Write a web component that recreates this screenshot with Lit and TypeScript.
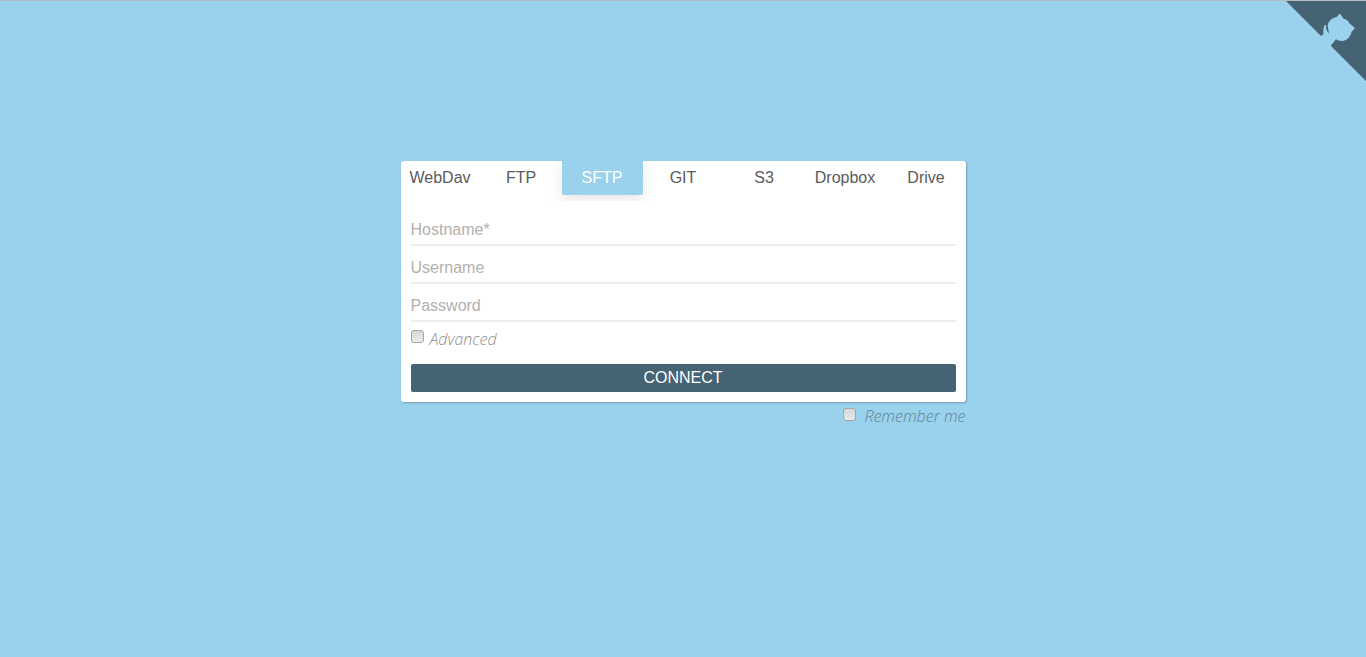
import { LitElement, html, css } from "lit";
import { customElement } from "lit/decorators.js";

const TABS = ["WebDav", "FTP", "SFTP", "GIT", "S3", "Dropbox", "Drive"];

@customElement("app-root")
export class AppRoot extends LitElement {
  static styles = css`
    :host {
      display: block;
      height: 657px;
      overflow: hidden;
      position: relative;
      background: #9ad1ed;
      border-top: 1px solid #b4bcc4;
      box-sizing: border-box;
      font-family: "Liberation Sans", Arial, sans-serif;
    }
    .corner {
      position: absolute;
      top: -1px;
      right: 0;
      width: 81px;
      height: 81px;
      display: block;
    }
    .wrap {
      width: 565px;
      margin: 0 auto;
      padding-top: 160px;
    }
    .card {
      background: #fff;
      border-radius: 3px;
      box-shadow: 1px 1px 2px rgba(70, 99, 115, 0.45);
      padding-bottom: 10px;
    }
    .tabs {
      display: grid;
      grid-template-columns: repeat(7, 81px);
      align-items: start;
      height: 40px;
      margin: 0 -1px;
      overflow: hidden;
    }
    .tab {
      text-align: center;
      font-size: 16px;
      line-height: 33px;
      height: 34px;
      color: #5b5b5b;
    }
    .tab.on {
      background: #9ad1ed;
      color: #fff;
      border-radius: 0 0 2px 2px;
      box-shadow: 0 5px 15px rgba(0, 0, 0, 0.1);
    }
    form {
      display: flex;
      flex-direction: column;
      padding: 11px 10px 0;
    }
    input.text {
      display: block;
      width: 100%;
      box-sizing: border-box;
      height: 38px;
      border: 0;
      border-bottom: 2px solid #eceff1;
      outline: none;
      padding: 8px 0 0;
      font: 16px "Liberation Sans", Arial, sans-serif;
      background: transparent;
    }
    input.text:first-child {
      height: 34px;
      padding-top: 4px;
    }
    input.text::placeholder {
      color: #b3b0ad;
      opacity: 1;
    }
    .check {
      display: flex;
      align-items: flex-start;
      font: italic 300 16px/20px "Open Sans", sans-serif;
    }
    .check input {
      appearance: none;
      margin: 0 6px 0 0;
      width: 13px;
      height: 13px;
      box-sizing: border-box;
      border: 1px solid #a6a6a6;
      border-radius: 3px;
      background: linear-gradient(#d8d8d8, #ececec);
    }
    .adv {
      color: #8e8e8e;
      margin-top: 8px;
      height: 34px;
    }
    .adv span {
      margin-top: -1px;
    }
    button {
      height: 28px;
      border: 0;
      border-radius: 2px;
      background: #466373;
      color: #fff;
      font: 16px "Liberation Sans", Arial, sans-serif;
      padding: 0;
    }
    .rem {
      justify-content: flex-end;
      color: #5f8496;
      margin-top: 6px;
    }
    .rem input {
      margin-right: 8px;
      background: linear-gradient(#d4d9dc, #e6e8ea);
    }
    .rem span {
      margin-top: -2px;
    }
  `;

  render() {
    return html`
      <svg class="corner" viewBox="0 0 81 81">
        <path d="M0 0H81V81Z" fill="#466373" />
        <path
          transform="translate(1 0)"
          fill="#9ad1ed"
          d="M54 13.5 L57.5 18.8 C60 19.3 62.5 21 63.5 23.3 L69 28.3 L65.5 32 C64.5 37 60.5 41 56 41 C53.5 41 51.5 40.3 50 39.3 L44.5 46 L42 46 L33 37 L37.3 34.5 C37 31 37.5 28 38.6 25.3 L40.4 25.3 C39.8 28 40 30.5 43 33.5 C42.6 31 42.3 29.5 42 27.7 C41.7 25.5 41.8 24.5 42.3 23 C43.6 20 47 17.6 50.7 17 Z"
        />
      </svg>
      <div class="wrap">
        <div class="card">
          <div class="tabs">
            ${TABS.map(
              (t) => html`<div class="tab ${t === "SFTP" ? "on" : ""}">${t}</div>`
            )}
          </div>
          <form>
            <input class="text" placeholder="Hostname*" />
            <input class="text" placeholder="Username" />
            <input class="text" type="password" placeholder="Password" />
            <label class="check adv"><input type="checkbox" /><span>Advanced</span></label>
            <button type="button">CONNECT</button>
          </form>
        </div>
        <label class="check rem"><input type="checkbox" /><span>Remember me</span></label>
      </div>
    `;
  }
}
